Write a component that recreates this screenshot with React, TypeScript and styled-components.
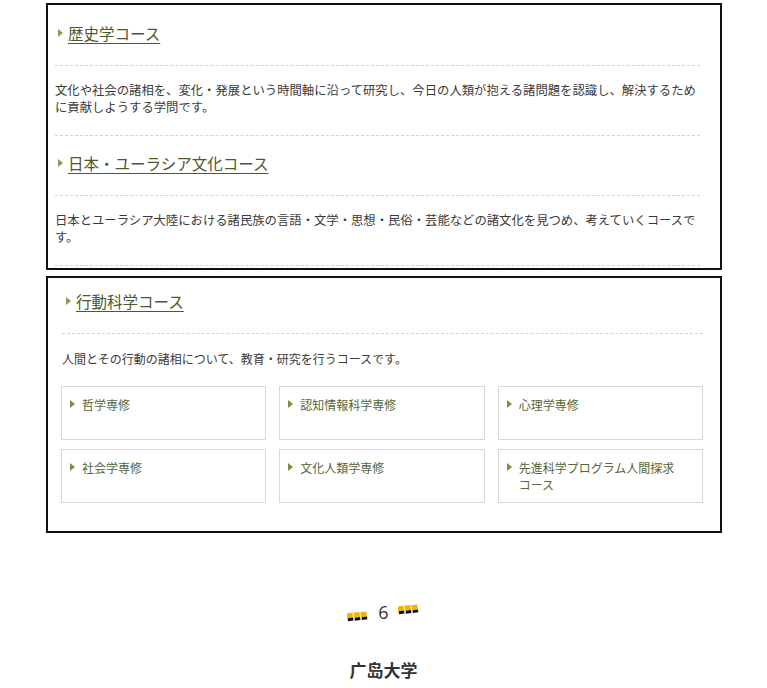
import styled, { createGlobalStyle } from "styled-components";

const GlobalStyle = createGlobalStyle`
  body {
    margin: 0;
    background: #fff;
    font-family: "Noto Sans CJK JP", "Noto Sans", sans-serif;
    color: #333;
  }
`;

const Page = styled.div`
  width: 767px;
  padding-top: 3px;
`;

const Box = styled.section<{ $pad: string; $gap?: number }>`
  margin-left: 46px;
  margin-top: ${({ $gap }) => $gap ?? 0}px;
  width: 676px;
  box-sizing: border-box;
  border: 2px solid #111;
  padding: ${({ $pad }) => $pad};
`;

const Heading = styled.h3<{ $pad: string }>`
  margin: 0;
  padding: ${({ $pad }) => $pad};
  border-bottom: 1px dashed #d4d4d4;
  display: flex;
  align-items: center;
  gap: 5px;
  font-size: 15.5px;
  line-height: 20px;
  font-weight: 400;
  color: #4b5a2c;
`;

const HeadLink = styled.a`
  color: inherit;
  text-decoration: underline;
  text-underline-offset: 3px;
  text-decoration-thickness: 1px;
`;

const Arrow = styled.span<{ $color: string }>`
  width: 0;
  height: 0;
  border-top: 4px solid transparent;
  border-bottom: 4px solid transparent;
  border-left: 5px solid ${({ $color }) => $color};
  flex: none;
`;

const Para = styled.p<{ $dashed?: boolean; $size: string; $pad: string }>`
  margin: 0;
  padding: ${({ $pad }) => $pad};
  font-size: ${({ $size }) => $size};
  line-height: 17px;
  color: #3a3a3a;
  border-bottom: ${({ $dashed }) => ($dashed ? "1px dashed #d4d4d4" : "none")};
`;

const Grid = styled.div`
  display: grid;
  grid-template-columns: repeat(3, 1fr);
  column-gap: 13px;
  row-gap: 9px;
  margin-left: -1px;
`;

const Card = styled.a`
  height: 54px;
  box-sizing: border-box;
  border: 1px solid #d8d8d8;
  padding: 9px 20px 0 8px;
  display: flex;
  align-items: flex-start;
  gap: 7px;
  font-size: 12px;
  line-height: 17px;
  color: #56663a;
  text-decoration: none;

  ${Arrow} {
    margin-top: 4px;
  }
`;

const Footer = styled.footer`
  display: flex;
  flex-direction: column;
  align-items: center;
  padding-top: 68px;
`;

const PageNum = styled.div`
  display: flex;
  align-items: center;
  gap: 9px;
  font-family: "Open Sans", "Liberation Sans", sans-serif;
  font-size: 18px;
  line-height: 22px;
  color: #333;
`;

const Deco = styled.svg<{ $shift: number }>`
  transform: translateY(${({ $shift }) => $shift}px);
`;

const School = styled.div`
  margin-top: 34px;
  font-family: "Noto Sans CJK SC", sans-serif;
  font-size: 17px;
  font-weight: 700;
  color: #333;
`;

const Dots = ({ shift }: { shift: number }) => (
  <Deco $shift={shift} width="22" height="13" viewBox="0 0 22 13">
    {[0, 7, 14].map((x, i) => (
      <g key={i} transform={`rotate(-8 ${x + 3} 6)`}>
        <rect x={x} y={2 - i * 0.6} width="6" height="5" fill="#f5b400" />
        <rect x={x + 0.5} y={7 - i * 0.6} width="5.5" height="3" fill="#111" />
      </g>
    ))}
  </Deco>
);

const courses = [
  {
    title: "歴史学コース",
    text:
      "文化や社会の諸相を、変化・発展という時間軸に沿って研究し、今日の人類が抱える諸問題を認識し、解決するために貢献しようする学問です。",
  },
  {
    title: "日本・ユーラシア文化コース",
    text:
      "日本とユーラシア大陸における諸民族の言語・文学・思想・民俗・芸能などの諸文化を見つめ、考えていくコースです。",
  },
];

const majors = [
  "哲学専修",
  "認知情報科学専修",
  "心理学専修",
  "社会学専修",
  "文化人類学専修",
  "先進科学プログラム人間探求コース",
];

export default function App() {
  return (
    <Page>
      <GlobalStyle />
      <Box $pad="1px 20px 2px 7px">
        {courses.map((c) => (
          <div key={c.title}>
            <Heading $pad="17px 0 22px 3px">
              <Arrow $color="#8c9c4c" />
              <HeadLink href="#">{c.title}</HeadLink>
            </Heading>
            <Para $dashed $size="12.35px" $pad="16px 0 19px">
              {c.text}
            </Para>
          </div>
        ))}
      </Box>
      <Box $pad="0 17px 28px 14px" $gap={6}>
        <Heading $pad="13px 0 22px 4px">
          <Arrow $color="#8c9c4c" />
          <HeadLink href="#">行動科学コース</HeadLink>
        </Heading>
        <Para $size="12px" $pad="16px 0 19px">
          人間とその行動の諸相について、教育・研究を行うコースです。
        </Para>
        <Grid>
          {majors.map((m) => (
            <Card key={m} href="#">
              <Arrow $color="#7f8f3f" />
              <span>{m}</span>
            </Card>
          ))}
        </Grid>
      </Box>
      <Footer>
        <PageNum>
          <Dots shift={5} />
          <span>6</span>
          <Dots shift={-2} />
        </PageNum>
        <School>广岛大学</School>
      </Footer>
    </Page>
  );
}
